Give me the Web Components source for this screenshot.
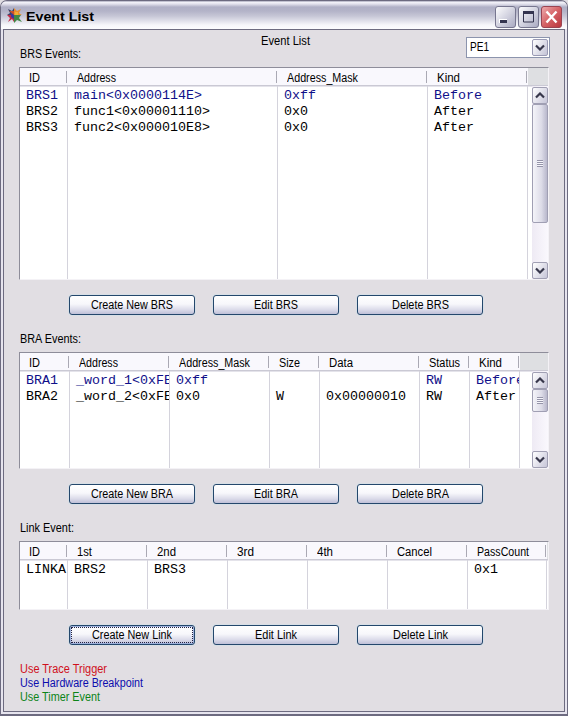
<!DOCTYPE html>
<html lang="en">
<head>
<meta charset="utf-8">
<title>Event List</title>
<style>
html,body{margin:0;padding:0;background:#e1dee3;overflow:hidden}
body{width:568px;height:716px;font:12px/14px "Liberation Sans",Arial,sans-serif;color:#000}
.top{display:grid;grid-template-columns:1fr 84px;height:37px}
.caption{padding:4px 0 0 241px}
.legend{display:flex;flex-direction:column;margin-top:17px}
</style>
</head>
<body>
<app-window>
  <div class="top">
    <div><div class="caption"><fit-text w="48">Event List</fit-text></div>
      <div style="margin-top:-1px"><fit-text w="60">BRS Events:</fit-text></div></div>
    <combo-box><fit-text w="18">PE1</fit-text></combo-box>
  </div>
  <event-table id="brs"></event-table>
  <button-row id="b1"></button-row>
  <div style="height:14px;margin-top:17px"><fit-text w="60">BRA Events:</fit-text></div>
  <event-table id="bra" style="margin-top:6px"></event-table>
  <button-row id="b2"></button-row>
  <div style="height:14px;margin-top:17px"><fit-text w="53">Link Event:</fit-text></div>
  <event-table id="link" style="margin-top:6px"></event-table>
  <button-row id="b3"></button-row>
  <div class="legend">
    <fit-text w="86" style="color:#d0101c">Use Trace Trigger</fit-text>
    <fit-text w="122" style="color:#0c0cae">Use Hardware Breakpoint</fit-text>
    <fit-text w="79" style="color:#0c8418">Use Timer Event</fit-text>
  </div>
</app-window>

<script>
// Text run condensed horizontally so that it spans w pixels.
class FitText extends HTMLElement{
  connectedCallback(){
    if(!this.shadowRoot){
      this.attachShadow({mode:'open'}).innerHTML=
      '<style>:host{display:block;white-space:pre}span{display:inline-block;transform-origin:0 50%}</style><span><slot></slot></span>';
    }
    const s=this.shadowRoot.querySelector('span'),w=+this.getAttribute('w');
    s.style.transform='none';
    const r=s.getBoundingClientRect().width;
    this.style.width=(w+1)+'px';
    if(r&&w)s.style.transform='scaleX('+(w+1)/r+')';
  }
}

class AppWindow extends HTMLElement{
  constructor(){
    super();
    this.attachShadow({mode:'open'}).innerHTML=`<style>
    :host{display:block;width:568px;height:716px;box-sizing:border-box;padding:1px 1px 2px;background:#6d6b80;overflow:hidden;border-radius:7px 7px 0 0}
    .frame{height:713px;box-sizing:border-box;padding:0 2px 2px;background:#e6e4ee;border-radius:6px 6px 0 0;display:flex;flex-direction:column}
    header{height:28px;flex:none;display:flex;align-items:center;margin:0 -2px;padding:4px 5px 0 6px;box-sizing:border-box;border-radius:6px 6px 0 0;
      background:linear-gradient(#8f8ea6 0,#f6f6fb 1px,#e2e1ec 3px,#b0b0c6 6px,#b3b3c8 10px,#c6c6d6 15px,#e0e0ea 20px,#f6f6fa 24px,#fcfcfe 28px)}
    .logo{margin-top:-4px}
    .name{font:bold 13.500px/16px "Liberation Sans",sans-serif;flex:1;margin:-1px 0 0 4px}
    .ctl{display:flex;gap:2px}
    main{flex:1;min-height:0;box-sizing:border-box;border:1px solid #6d6b80;background:#e1dee3;padding:0 16px}
    svg{display:block}
    </style><div class="frame"><header>
    <svg class="logo" width="15" height="15" viewBox="0 0 15 15"><path d="M1 1 5 3 7 0V7H0L3 5Z" fill="#39436b"/><path d="M7 0 10 3 14 1 12 5 15 7H7Z" fill="#e98d30"/><path d="M0 7H7V14L5 11 1 14 3 10Z" fill="#c12c47"/><path d="M7 7H14L12 10 15 14 10 12 7 15Z" fill="#438748"/><path d="M4 5 7 7V11L4 9Z" fill="#4035a0"/><path d="M2 3 7 7V3Z" fill="#c8512e"/><path d="M8 4h3v3H8z" fill="#f2ad32"/></svg>
    <div class="name"><fit-text w="67">Event List</fit-text></div>
    <div class="ctl">
    <svg width="21" height="22"><rect x=".5" y=".5" width="20" height="21" rx="2.5" fill="url(#g)" stroke="#77768f"/><defs><linearGradient id="g" x2="1" y2="1"><stop stop-color="#fff"/><stop offset=".5" stop-color="#d4d4e1"/><stop offset="1" stop-color="#a8a8c0"/></linearGradient></defs><path d="M4 13h8v4H4z" fill="#fff"/><path d="M5 14h7v3H5z" fill="#34344f"/></svg>
    <svg width="21" height="22"><rect x=".5" y=".5" width="20" height="21" rx="2.5" fill="url(#g)" stroke="#77768f"/><path d="M5.500 6v10h10V6z" fill="none" stroke="#34344f"/><path d="M5 5h11v3H5z" fill="#34344f"/></svg>
    <svg width="21" height="22"><defs><linearGradient id="r" x2="1" y2="1"><stop stop-color="#eeadb0"/><stop offset=".5" stop-color="#d56266"/><stop offset="1" stop-color="#b8353d"/></linearGradient></defs><rect x=".5" y=".5" width="20" height="21" rx="2.5" fill="url(#r)" stroke="#9a4452"/><path d="M5.500 5.500l10 11M15.500 5.500l-10 11" stroke="#fff" stroke-width="2.400"/></svg>
    </div></header><main><slot></slot></main></div>`;
  }
}

const chevron=(up)=>`<svg width="10" height="7" viewBox="0 0 10 7" style="display:block"><path d="${up?'M1 5.500 5 1.500 9 5.500':'M1 1.500 5 5.500 9 1.500'}" fill="none" stroke="#37374b" stroke-width="2.200"/></svg>`;

class ComboBox extends HTMLElement{
  constructor(){
    super();
    this.attachShadow({mode:'open'}).innerHTML=`<style>
    :host{display:flex;box-sizing:border-box;width:84px;height:21px;margin-top:7px;margin-left:2px;border:1px solid #8c94ad;background:#fff;padding:1px}
    .t{flex:1;padding:1px 0 0 2px}
    .b{width:16px;box-sizing:border-box;border:1px solid #9a9ab4;border-radius:2px;background:linear-gradient(120deg,#fff,#c3c3d6);display:grid;place-items:center}
    </style><div class="t"><slot></slot></div><div class="b">${chevron(false)}</div>`;
  }
}

class ScrollBar extends HTMLElement{
  connectedCallback(){
    const top=this.getAttribute('thumb');
    this.attachShadow({mode:'open'}).innerHTML=`<style>
    :host{display:flex;flex-direction:column;width:16px;background:linear-gradient(90deg,#eeeaf4,#faf8fd);padding:1px 0 0}
    .b,.k{box-sizing:border-box;width:16px;border:1px solid #a09fb3;border-radius:2px;display:grid;place-items:center;background:linear-gradient(120deg,#fff,#c6c5d8);flex:none}
    .b{height:17px}.k{height:${top}px;background:linear-gradient(90deg,#f4f4f9,#dddce8 60%,#b9b8cc)}
    .g{width:6px;height:7px;background:repeating-linear-gradient(#9594a9 0 1px,#f6f6fb 1px 2px)}
    .s{flex:1}
    </style><div class="b">${chevron(true)}</div><div class="k"><div class="g"></div></div><div class="s"></div><div class="b">${chevron(false)}</div>`;
  }
}

class EventTable extends HTMLElement{
  set data(d){
    const root=this.shadowRoot||this.attachShadow({mode:'open'});
    const cols=d.cols.map(c=>c[2]+'px').join(' ')+' 1fr';
    root.innerHTML=`<style>
    :host{display:block;box-sizing:border-box;width:530px;height:${d.h}px;margin-left:-1px;border:1px solid #8e8d9a;border-right-color:#f4f2f6;border-bottom-color:#f4f2f6;background:#fff;overflow:hidden}
    .head{display:grid;grid-template-columns:${cols};height:18px;box-sizing:border-box;background:#f9f8fd;border-bottom:1px solid #cac9d4;box-shadow:0 1px #e4e3ea}
    .head>div{box-sizing:border-box;padding:3px 0 0 ${d.hp}px;position:relative;white-space:nowrap}
    .head>div:first-child{padding-left:9px}
    .tick{position:absolute;right:${d.tick}px;top:3px;width:1px;height:12px;background:#aaa9b4}
    .head .rest{background:#dedfe2}
    .body{display:flex;height:calc(100% - 18px)}
    .cols{display:grid;grid-template-columns:${cols};flex:1;min-width:0}
    .col{box-sizing:border-box;border-right:1px solid #d4d3dc;overflow:hidden;padding:2px 0 0 ${d.bp}px;font:13.333px/16px "Liberation Mono","Courier New",monospace;white-space:pre}
    .col:first-child{padding-left:6px}
    .col div{height:16px}.hl{color:#10108a}
    </style><div class="head">${d.cols.map(c=>`<div><fit-text w="${c[1]}">${c[0]}</fit-text><span class="tick"></span></div>`).join('')}<div class="rest"></div></div>
    <div class="body"><div class="cols">${d.cols.map((c,i)=>`<div class="col">${d.rows.map((r,j)=>`<div class="${d.hl&&j===0?'hl':''}">${r[i].replace(/</g,'&lt;')}</div>`).join('')}</div>`).join('')}</div>${d.thumb?`<scroll-bar thumb="${d.thumb}"></scroll-bar>`:''}</div>`;
  }
}

class PushButton extends HTMLElement{
  connectedCallback(){
    this.attachShadow({mode:'open'}).innerHTML=`<style>
    :host{display:flex;box-sizing:border-box;width:126px;height:20px;border:1px solid #24476c;border-radius:3px;justify-content:center;align-items:center;position:relative;
    background:linear-gradient(#fff,#f7f7fb 45%,#dcdcea 75%,#bfc0d8);box-shadow:0 0 0 1px #d7dfe6}
    :host([focused]){box-shadow:inset 0 0 0 1px #9eb1dc,0 0 0 1px #d7dfe6}
    :host([focused])::after{content:"";position:absolute;inset:1px;border:1px dotted #222244}
    </style><slot></slot>`;
  }
}
class ButtonRow extends HTMLElement{
  set items(a){
    this.attachShadow({mode:'open'}).innerHTML=`<style>:host{display:flex;gap:18px;padding-left:49px;margin:15px 0 0}</style>`+
    a.map(b=>`<push-button ${b[2]?'focused':''}><fit-text w="${b[1]}">${b[0]}</fit-text></push-button>`).join('');
  }
}
customElements.define('app-window',AppWindow);
customElements.define('combo-box',ComboBox);
customElements.define('scroll-bar',ScrollBar);
customElements.define('event-table',EventTable);
customElements.define('push-button',PushButton);
customElements.define('button-row',ButtonRow);
customElements.define('fit-text',FitText);

const $=id=>document.getElementById(id);
$('brs').data={h:213,hp:9,bp:6,tick:1,hl:true,thumb:119,
  cols:[['ID',10,48],['Address',38,210],['Address_Mask',70,150],['Kind',22,100]],
  rows:[['BRS1','main<0x0000114E>','0xff','Before'],['BRS2','func1<0x00001110>','0x0','After'],['BRS3','func2<0x000010E8>','0x0','After']]};
$('bra').data={h:117,hp:9,bp:6,tick:1,hl:true,thumb:23,
  cols:[['ID',10,50],['Address',38,100],['Address_Mask',70,100],['Size',20,50],['Data',23,100],['Status',30,50],['Kind',22,50]],
  rows:[['BRA1','_word_1<0xFE','0xff','','','RW','Before'],['BRA2','_word_2<0xFE','0x0','W','0x00000010','RW','After']]};
$('link').data={h:69,hp:9,bp:6,tick:1,
  cols:[['ID',10,48],['1st',14,80],['2nd',18,80],['3rd',16,80],['4th',15,80],['Cancel',34,80],['PassCount',51,79]],
  rows:[['LINKA','BRS2','BRS3','','','','0x1']]};
$('b1').items=[['Create New BRS',81],['Edit BRS',43],['Delete BRS',56]];
$('b2').items=[['Create New BRA',81],['Edit BRA',43],['Delete BRA',56]];
$('b3').items=[['Create New Link',79,1],['Edit Link',41],['Delete Link',54]];
</script>
</body>
</html>
